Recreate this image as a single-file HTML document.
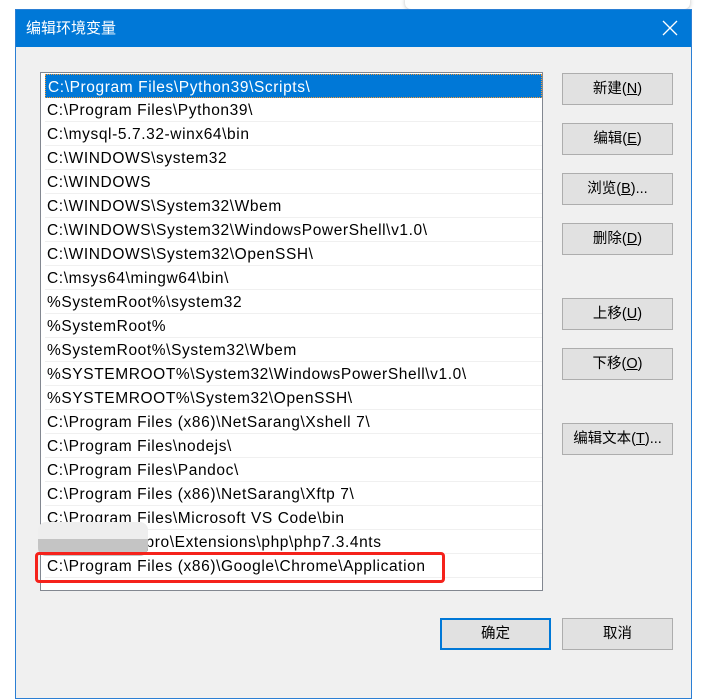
<!DOCTYPE html>
<html><head><meta charset="utf-8"><style>
*{margin:0;padding:0;box-sizing:border-box}
body{width:703px;height:677px;background:#fff;position:relative;overflow:hidden;font-family:"Liberation Sans","Noto Sans CJK SC",sans-serif;font-size:14.5px;color:#000}
.top{position:absolute;left:405px;top:-6px;width:285px;height:15px;background:#fff;border-radius:6px;box-shadow:0 1px 4px rgba(0,0,0,.25)}
.dlg{position:absolute;left:15px;top:9px;width:677px;height:690px;background:#f0f0f0;border:1px solid #2b7fd4}
.title{position:absolute;left:0;top:0;width:100%;height:37px;background:#0078d7;color:#fff;font-size:15px;line-height:37px;padding-left:10px}
.x{position:absolute;right:12px;top:9px;width:18px;height:18px}
.list{position:absolute;left:40px;top:72px;width:503px;height:519px;background:#fff;border:1px solid #828790}
.row{position:absolute;left:4px;width:497px;height:24px;line-height:26px;padding-left:2px;border-bottom:1px solid #f0f0f0;white-space:nowrap;font-size:15.5px;letter-spacing:0.6px}
.sel{background:#0078d7;color:#fff;border:1px dotted #f39a37}
.btn{position:absolute;width:111px;height:32px;background:#e1e1e1;border:1px solid #adadad;text-align:center;line-height:31px;font-size:14.5px}
.def{border:2px solid #0078d7;line-height:29px}
.red{position:absolute;left:35px;top:552px;width:410px;height:31px;border:3px solid #f5221b;border-radius:4px}
.blur{position:absolute;left:38px;top:522px;width:110px;height:34px;border-radius:8px;background:linear-gradient(#eeeeee 0,#eeeeee 50%,#c4c4c4 50%,#c4c4c4 100%)}
</style></head><body>
<div class="top"></div>
<div class="dlg">
<div class="title">编辑环境变量
<svg class="x" viewBox="0 0 18 18"><path d="M2 2L16 16M16 2L2 16" stroke="#fff" stroke-width="1.3"/></svg></div>
</div>
<div class="list">
<div class="row sel" style="top:1px">C:\Program Files\Python39\Scripts\</div>
<div class="row" style="top:25px">C:\Program Files\Python39\</div>
<div class="row" style="top:49px">C:\mysql-5.7.32-winx64\bin</div>
<div class="row" style="top:73px">C:\WINDOWS\system32</div>
<div class="row" style="top:97px">C:\WINDOWS</div>
<div class="row" style="top:121px">C:\WINDOWS\System32\Wbem</div>
<div class="row" style="top:145px">C:\WINDOWS\System32\WindowsPowerShell\v1.0\</div>
<div class="row" style="top:169px">C:\WINDOWS\System32\OpenSSH\</div>
<div class="row" style="top:193px">C:\msys64\mingw64\bin\</div>
<div class="row" style="top:217px">%SystemRoot%\system32</div>
<div class="row" style="top:241px">%SystemRoot%</div>
<div class="row" style="top:265px">%SystemRoot%\System32\Wbem</div>
<div class="row" style="top:289px">%SYSTEMROOT%\System32\WindowsPowerShell\v1.0\</div>
<div class="row" style="top:313px">%SYSTEMROOT%\System32\OpenSSH\</div>
<div class="row" style="top:337px">C:\Program Files (x86)\NetSarang\Xshell 7\</div>
<div class="row" style="top:361px">C:\Program Files\nodejs\</div>
<div class="row" style="top:385px">C:\Program Files\Pandoc\</div>
<div class="row" style="top:409px">C:\Program Files (x86)\NetSarang\Xftp 7\</div>
<div class="row" style="top:433px">C:\Program Files\Microsoft VS Code\bin</div>
<div class="row" style="top:457px">C:\phpstudy_pro\Extensions\php\php7.3.4nts</div>
<div class="row" style="top:481px">C:\Program Files (x86)\Google\Chrome\Application</div>
</div>
<div class="blur"></div>
<div class="red"></div>
<div class="btn" style="left:562px;top:73px">新建(<u>N</u>)</div>
<div class="btn" style="left:562px;top:123px">编辑(<u>E</u>)</div>
<div class="btn" style="left:562px;top:173px">浏览(<u>B</u>)...</div>
<div class="btn" style="left:562px;top:223px">删除(<u>D</u>)</div>
<div class="btn" style="left:562px;top:298px">上移(<u>U</u>)</div>
<div class="btn" style="left:562px;top:348px">下移(<u>O</u>)</div>
<div class="btn" style="left:562px;top:423px">编辑文本(<u>T</u>)...</div>
<div class="btn def" style="left:440px;top:618px">确定</div>
<div class="btn" style="left:562px;top:618px">取消</div>
</body></html>
